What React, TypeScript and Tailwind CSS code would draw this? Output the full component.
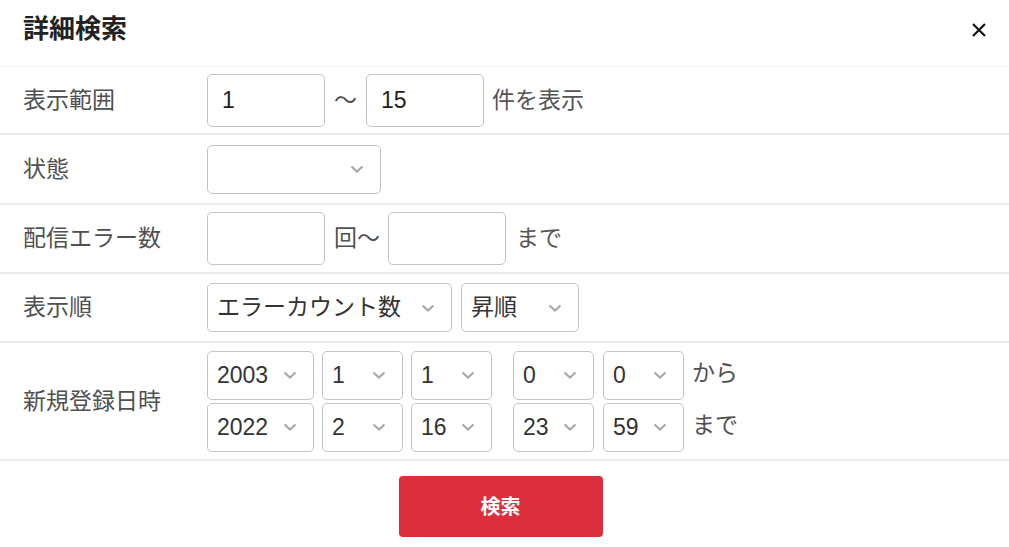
import React from "react";

const font = { fontFamily: '"Liberation Sans", "Noto Sans CJK JP", sans-serif' };

const Chevron = () => (
    <svg width="14" height="8" viewBox="0 0 14 8" className="shrink-0">
        <path d="M1.5 1.5 L7 6.5 L12.5 1.5" fill="none" stroke="#a8a8a8" strokeWidth="2.2" />
    </svg>
);

const Select = ({ value, w, h = "h-[49px]" }: { value: string; w: string; h?: string }) => (
    <div className={`${w} ${h} flex items-center justify-between border border-[#c4c4c4] rounded-[5px] pl-[9px] pr-[16px] text-[#333] bg-white`}>
        <span>{value}</span>
        <Chevron />
    </div>
);

const Input = ({ value }: { value: string }) => (
    <div className="w-[118px] h-[53px] flex items-center border border-[#c4c4c4] rounded-[5px] px-[14px] text-[#222]">
        {value}
    </div>
);

const Row = ({ label, h, children }: { label: string; h: string; children: React.ReactNode }) => (
    <div className={`${h} flex items-center border-b-2 border-[#ebebeb]`}>
        <div className="w-[207px] pl-[23px] text-[#505050]">{label}</div>
        <div className="flex items-center">{children}</div>
    </div>
);

export default function App() {
    return (
        <div className="w-[1009px] h-[547px] bg-white text-[23px] leading-none overflow-hidden" style={font}>
            <div className="h-[67px] flex items-center justify-between pl-[23px] pr-[22px] border-b border-[#f3f3f3]">
                <h1 className="text-[26px] font-bold text-[#222] -mt-[8px]">詳細検索</h1>
                <svg width="16" height="16" viewBox="0 0 16 16" className="-mt-[6px]">
                    <path d="M2 2 L14 14 M14 2 L2 14" stroke="#111" strokeWidth="2.2" />
                </svg>
            </div>

            <Row label="表示範囲" h="h-[68px]">
                <Input value="1" />
                <span className="mx-[9px] text-[#505050]">～</span>
                <Input value="15" />
                <span className="ml-[8px] text-[#555]">件を表示</span>
            </Row>

            <Row label="状態" h="h-[70px]">
                <Select value="" w="w-[174px]" />
            </Row>

            <Row label="配信エラー数" h="h-[69px]">
                <Input value="" />
                <span className="ml-[9px] mr-[8px] text-[#505050]">回～</span>
                <Input value="" />
                <span className="ml-[10px] text-[#555]">まで</span>
            </Row>

            <Row label="表示順" h="h-[69px]">
                <Select value="エラーカウント数" w="w-[245px]" />
                <div className="w-[9px]" />
                <Select value="昇順" w="w-[118px]" />
            </Row>

            <Row label="新規登録日時" h="h-[118px]">
                <div className="flex flex-col gap-[3px]">
                    {[
                        ["2003", "1", "1", "0", "0", "から"],
                        ["2022", "2", "16", "23", "59", "まで"],
                    ].map((r) => (
                        <div key={r[0]} className="flex items-center">
                            <Select value={r[0]} w="w-[107px]" />
                            <div className="w-[8px]" />
                            <Select value={r[1]} w="w-[81px]" />
                            <div className="w-[8px]" />
                            <Select value={r[2]} w="w-[81px]" />
                            <div className="w-[21px]" />
                            <Select value={r[3]} w="w-[81px]" />
                            <div className="w-[9px]" />
                            <Select value={r[4]} w="w-[81px]" />
                            <span className="ml-[8px] text-[#505050] -mt-[4px]">{r[5]}</span>
                        </div>
                    ))}
                </div>
            </Row>

            <div className="flex justify-center pt-[15px] pr-[8px]">
                <button className="w-[204px] h-[61px] rounded-[4px] bg-[#dc2f3d] text-white font-bold text-[20px]">
                    検索
                </button>
            </div>
        </div>
    );
}
